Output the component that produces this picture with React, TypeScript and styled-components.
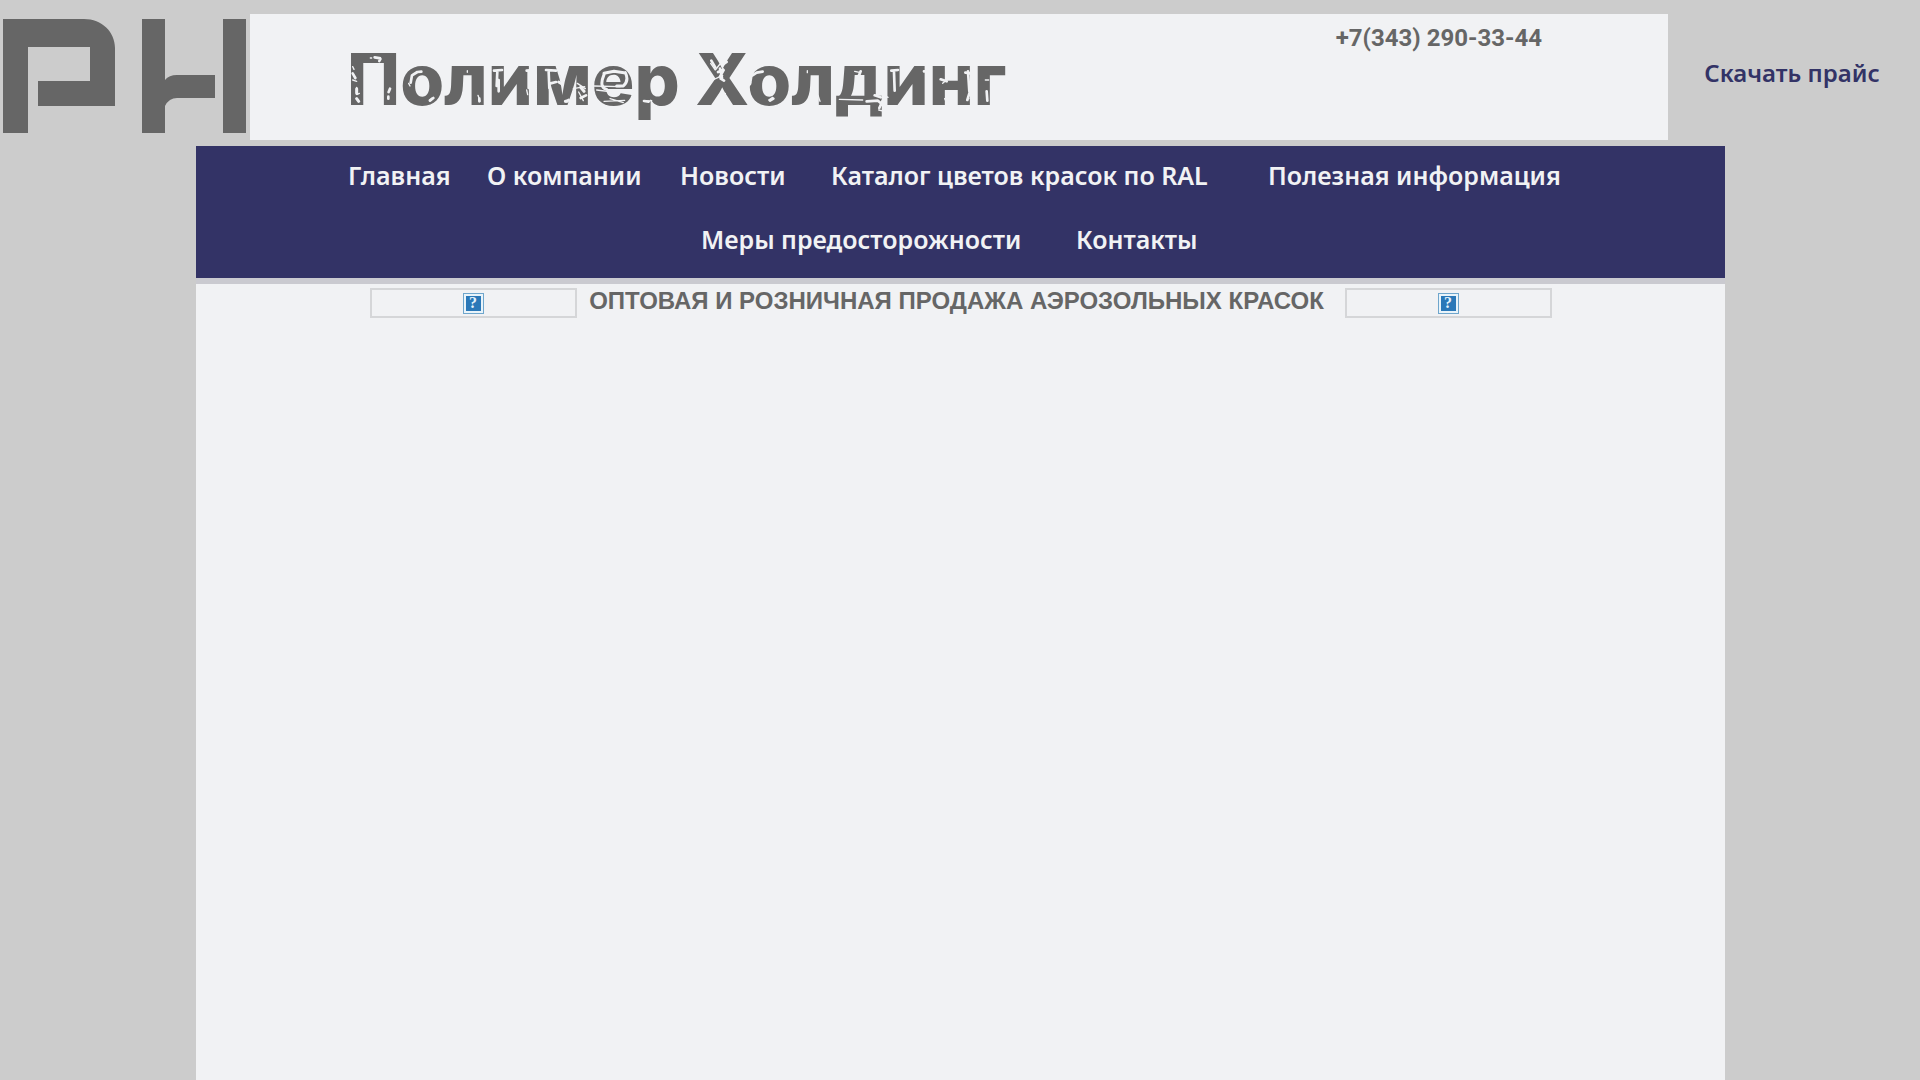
import React from 'react';
import styled, { createGlobalStyle } from 'styled-components';

const color = {
  page: '#cccccc',
  panel: '#f1f2f4',
  navy: '#333366',
  grey: '#666666',
  strip: '#cacad0',
  frame: '#d5d6d8',
};

const GlobalStyle = createGlobalStyle`
  *, *::before, *::after { box-sizing: border-box; }
  body { margin: 0; background: ${color.page}; }
`;

const Page = styled.div`
  display: flex;
  flex-direction: column;
  min-height: 100vh;
  padding-top: 14px;
  font-family: "Noto Sans", "Open Sans", sans-serif;
`;

const Header = styled.header`
  display: flex;
  align-items: stretch;
  margin-bottom: 6px;
`;

const LogoLink = styled.a`
  flex: 0 0 250px;
  svg { display: block; }
`;

const Banner = styled.div`
  flex: 1;
  display: flex;
  justify-content: space-between;
  align-items: flex-start;
  min-height: 126px;
  padding: 10px 126px 0 97px;
  background: ${color.panel};
  color: ${color.grey};
`;

const Title = styled.h1`
  position: relative;
  margin: 13px 0 0;
  font: 800 71px/85px Inter, sans-serif;
  white-space: nowrap;
`;

const Scratches = styled.svg`
  position: absolute;
  top: 0;
  left: 0;
  fill: none;
  stroke: ${color.panel};
  stroke-linecap: round;
  stroke-linejoin: bevel;
`;

const Phone = styled.a`
  font: 700 24px/28px Roboto, sans-serif;
  color: inherit;
  text-decoration: none;
  white-space: nowrap;
`;

const Aside = styled.div`
  flex: 0 0 252px;
  display: flex;
  justify-content: center;
  padding: 42px 4px 0 0;
`;

const PriceLink = styled.a`
  font-size: 24px;
  font-weight: 600;
  line-height: 34px;
  color: ${color.navy};
  text-decoration: none;
`;

const Main = styled.div`
  flex: 1;
  display: flex;
  flex-direction: column;
  margin: 0 195px 0 196px;
`;

const Nav = styled.nav`
  display: flex;
  flex-direction: column;
  align-items: center;
  gap: 30px;
  padding: 12px 0 22px;
  background: ${color.navy};
`;

const NavRow = styled.div<{ $columns: string }>`
  display: grid;
  grid-template-columns: ${p => p.$columns};
  margin-right: 22px;
`;

const NavLink = styled.a`
  font-size: 25px;
  font-weight: 600;
  line-height: 34px;
  color: ${color.panel};
  text-decoration: none;
  white-space: nowrap;
`;

const Content = styled.main`
  flex: 1;
  border-top: 6px solid ${color.strip};
  background: ${color.panel};
`;

const Promo = styled.div`
  display: flex;
  justify-content: center;
  align-items: flex-start;
  gap: 4px;
  padding-top: 4px;
`;

const Heading = styled.h2`
  flex: 0 0 760px;
  margin: 0;
  padding-right: 8px;
  font: 700 24px/26px "Liberation Sans", Arial, sans-serif;
  color: ${color.grey};
  text-align: center;
`;

const Placeholder = styled.div`
  display: flex;
  justify-content: center;
  align-items: center;
  width: 207px;
  height: 30px;
  border: 2px solid ${color.frame};
`;

const Missing = styled.span`
  display: flex;
  justify-content: center;
  align-items: center;
  width: 21px;
  height: 21px;
  border: 1px solid #6fa6cc;
  background: #2a78b8;
  box-shadow: inset 0 0 0 2px #e9f4fa;
  font: 700 16px/16px "Liberation Serif", serif;
  color: #e4f3fb;
`;

const navRows = [
  {
    columns: '139px 193px 151px 437px 283px',
    links: ['Главная', 'О компании', 'Новости', 'Каталог цветов красок по RAL', 'Полезная информация'],
  },
  { columns: '375px 122px', links: ['Меры предосторожности', 'Контакты'] },
];

const scratches: { width: number; d: string }[] = [
  {
    width: 4,
    d: 'M91 84h4 M38 110l4 8 M38 150l12 4 M50 172v22l8-4 M206 160l4 8 M268 210l8-6 M382 122v5 M414 196l6 18 M560 180l3 14 M792 214l62-3 M810 206l40 12 M760 168l80 2 M712 160l24 16 M716 186l14 26 M915 214l20-2 M963 160v14 M832 188l-62-8 M700 176l34-6',
  },
  {
    width: 8,
    d: 'M104 82l18 3-4 8 M38 130l8 14 M150 176l-4 10 M145 200v6 M212 158l4-22 16-10 12-1 M270 212l10-8 M462 122l24-2 M472 124l-2 44 M476 150v34 M566 122v52 M578 120l-18 2 M618 120l30 2 M626 126l2 48 M632 160l16-4 M656 156l10 6 M678 214l8-4 M722 204l16-8 M912 213l14 2 M418 206v8',
  },
  {
    width: 9,
    d: 'M50 176v14 M50 206l6 8 M792 134q-16 38 8 44 M792 130l30-6 30 4 M856 128q12 24-6 40l-20 0 M676 214h6 M722 172l10 12',
  },
  {
    width: 4,
    d: 'M1112 100l14 20 14-18 M1118 150l30-14 M1156 190v10 M1228 168l4-10 M1286 210l12-8 M1402 122v6 M1434 196l6 18 M1498 208l70 2 M1618 184l12 8 M1616 240l18 4 M1632 196l12 6 M1772 184l2 20 M1808 160l14-12 M1814 206l4 8 M1936 150h10 M1890 206l16 6 M1544 124l18 4-10 10',
  },
  {
    width: 8,
    d: 'M1114 92l12 20 M1148 104l12-8 M1134 126l18-8-12 22 M1142 146l10 6 M1140 116l6 28 M1230 162l4-24 16-10 18-3 M1290 212l10-6 M1562 124l-4 10 M1580 214l34-2 14 12 M1604 196l18 6 M1628 212l-10 22 M1654 122l20-2 M1662 126l2 56 M1760 122l4 58 M1772 122l-20 2 M1820 154l-18-6 M1884 124l4 60 M1876 128l18 2 M1888 190l-6 20 M1940 184l2 28',
  },
];

function Logo() {
  return (
    <svg width="250" height="126" viewBox="0 14 250 126" fill={color.grey} role="img" aria-label="PH">
      <path d="M3 19H84C102 19 115 32 115 48V106H38V81H90V47H28V133H3Z" />
      <path d="M142 19H165V80Q169 75 177 75H215V98H177Q169 98 165 106V133H142Z" />
      <path d="M223 19H246V133H223Z" />
    </svg>
  );
}

function MissingImage() {
  return (
    <Placeholder>
      <Missing>?</Missing>
    </Placeholder>
  );
}

export default function App() {
  return (
    <>
      <GlobalStyle />
      <Page>
        <Header>
          <LogoLink href="#">
            <Logo />
          </LogoLink>
          <Banner>
            <Title>
              Полимер Холдинг
              <Scratches width="670" height="85" viewBox="21 21 2010 255" aria-hidden="true">
                {scratches.map((s, i) => (
                  <path key={i} strokeWidth={s.width} d={s.d} />
                ))}
              </Scratches>
            </Title>
            <Phone href="tel:+73432903344">+7(343) 290-33-44</Phone>
          </Banner>
          <Aside>
            <PriceLink href="#price">Скачать прайс</PriceLink>
          </Aside>
        </Header>
        <Main>
          <Nav>
            {navRows.map(row => (
              <NavRow key={row.columns} $columns={row.columns}>
                {row.links.map(text => (
                  <NavLink key={text} href="#">{text}</NavLink>
                ))}
              </NavRow>
            ))}
          </Nav>
          <Content>
            <Promo>
              <MissingImage />
              <Heading>ОПТОВАЯ И РОЗНИЧНАЯ ПРОДАЖА АЭРОЗОЛЬНЫХ КРАСОК</Heading>
              <MissingImage />
            </Promo>
          </Content>
        </Main>
      </Page>
    </>
  );
}
